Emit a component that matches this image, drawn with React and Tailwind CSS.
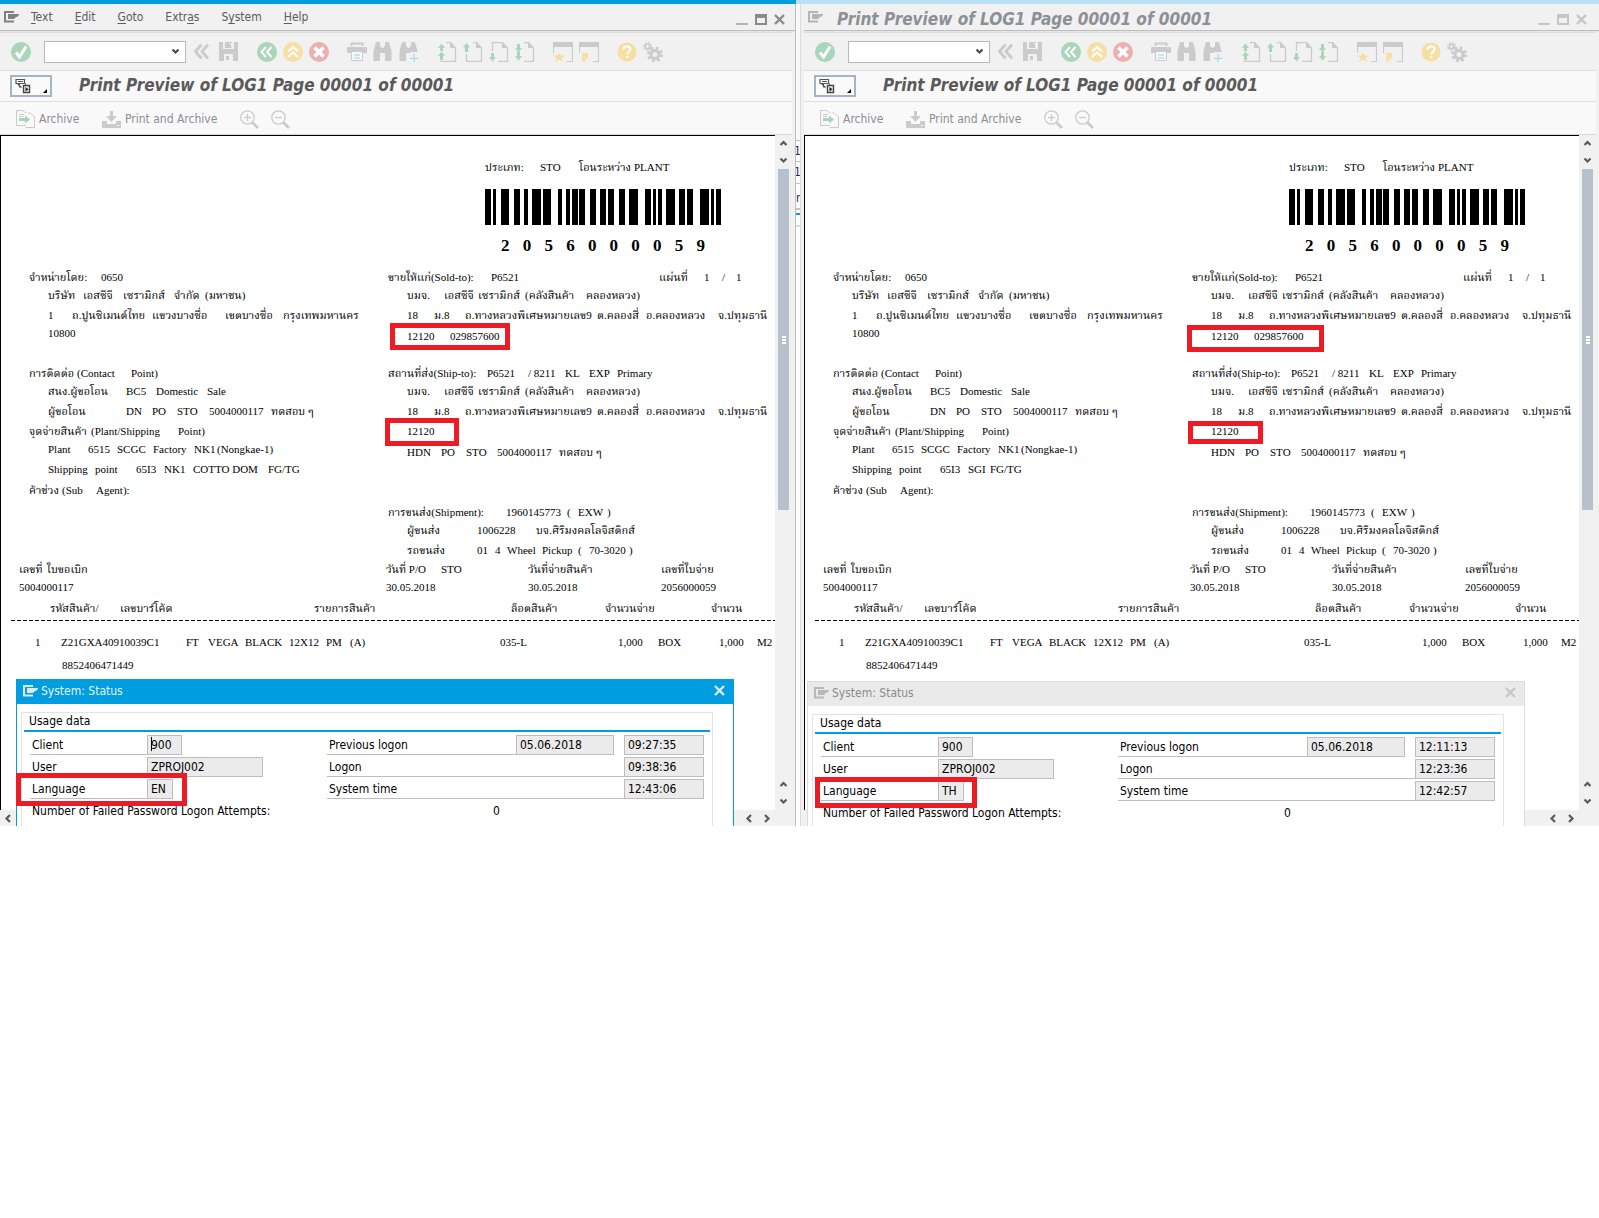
import React from "react";

const DOC_FONT = "font-['Liberation_Serif','Noto_Serif_Thai',serif]";

/* ---------- icons ---------- */

function Ico({ children, className = "size-5", box = "0 0 20 20" }) {
  return (
    <svg viewBox={box} className={className} fill="none" aria-hidden="true">
      {children}
    </svg>
  );
}

const GREY = "#cbcbcb";
const GREEN = "#a9d5b9";
const AMBER = "#f7dfa3";

function MenuIcon({ color }) {
  return (
    <svg viewBox="0 0 15 12" className="h-3 w-[15px] shrink-0" fill="none" aria-hidden="true">
      <path d="M10 1H1v9.500h9" stroke={color} strokeWidth="2" />
      <path d="M4 3h11v1l-2 2h-1l-2 2H4z" fill={color} />
    </svg>
  );
}

function CheckIcon() {
  return (
    <Ico>
      <circle cx="10" cy="10" r="10" fill={GREEN} />
      <path d="M5 10.500l3.500 4.500L15 4.500" stroke="#fff" strokeWidth="3" />
    </Ico>
  );
}

function BackChevrons() {
  return (
    <Ico>
      <path d="M8.500 2.500L2.500 9.500l6 7M15 2.500L9 9.500l6 7" stroke={GREY} strokeWidth="2.800" />
    </Ico>
  );
}

function SaveIcon() {
  return (
    <Ico>
      <path fillRule="evenodd" fill={GREY} d="M0 0h19v19H0zM4 0v7h11V0zM5 12v7h9v-7z" />
      <path fill={GREY} d="M6 0h7v6H6zM7 14h3v4H7z" />
      <path d="M10.500 1.500h2v4" stroke="#f1f1f1" />
    </Ico>
  );
}

function CircleBack() {
  return (
    <Ico>
      <circle cx="10" cy="10" r="10" fill={GREEN} />
      <path d="M9 5l-4.500 5L9 15M14.500 5L10 10l4.500 5" stroke="#fff" strokeWidth="2" />
    </Ico>
  );
}

function CircleUp() {
  return (
    <Ico>
      <circle cx="10" cy="10" r="10" fill={AMBER} />
      <path d="M5 9.500L10 5l5 4.500M5 15l5-4.500L15 15" stroke="#fff" strokeWidth="2.200" />
    </Ico>
  );
}

function CircleX() {
  return (
    <Ico>
      <circle cx="10" cy="10" r="10" fill="#ebb0b0" />
      <path d="M5.500 5.500l9 9M14.500 5.500l-9 9" stroke="#fff" strokeWidth="3.600" />
    </Ico>
  );
}

function PrinterIcon() {
  return (
    <Ico>
      <path d="M4.500 4V1.500h11V4" stroke={GREY} strokeWidth="2" />
      <rect y="5" width="20" height="6" rx="1" fill={GREY} />
      <path d="M0 8h3v3H0zM17 8h3v3h-3z" fill={GREY} />
      <path d="M4.500 9.500h11v9h-11z" fill="#f7f7f7" stroke={GREY} />
      <path d="M7 13h6M7 16h6" stroke="#b9e0f3" strokeWidth="1.500" />
      <path d="M16 6h2" stroke="#b9e0f3" strokeWidth="1.500" />
    </Ico>
  );
}

function Binoculars({ plus }) {
  return (
    <Ico>
      <path d="M3 0h4v4l2 2h1l2-2V0h4l2.500 9v10H12v-8H7v8H.500V9z" fill={GREY} />
      {plus && (
        <>
          <path d="M11 10h9v10h-9z" fill="#f1f1f1" />
          <path d="M11 16.500h8M15 12v8" stroke="#9ad4f0" />
        </>
      )}
    </Ico>
  );
}

const pageArrows = {
  first: ["M1 6l3.500-4.500L8 6H6v3H3V6z", "M1 14l3.500-4.500L8 14H6v4H3v-4z"],
  up: ["M0 5.500L3.500 1 7 5.500H5V10H2V5.500z"],
  down: ["M0 15l3.500 4.500L7 15H5v-4H2v4z"],
  last: ["M0 6l3.500 4.500L7 6H5V2H2v4z", "M0 14l3.500 4.500L7 14H5v-4H2v4z"],
};

const pageOutlines = {
  first: "M9 .500h4.500L18.500 6v13.500H2.500",
  up: "M10 .500h3.500L18.500 6v13.500h-15V12",
  down: "M3.500 9V.500h10L18.500 6v13.500H9",
  last: "M9 .500h4.500L18.500 6v13.500H9",
};

function PageIcon({ kind }) {
  return (
    <Ico>
      <path d={pageOutlines[kind]} stroke={GREY} strokeWidth="1.300" />
      <path d="M13 0v6h6z" fill={GREY} />
      {pageArrows[kind].map((d) => (
        <path key={d} d={d} fill={GREEN} />
      ))}
    </Ico>
  );
}

function WinStar({ arrow }) {
  return (
    <Ico>
      <path d="M0 0h20v5H0z" fill={GREY} />
      <path d="M.500 5v6M19.500 5v14.500H14" stroke={GREY} strokeWidth="1.200" />
      {arrow ? (
        <path d="M2 11h7v7l-2-2c-2 1-1 2 0 4H4c-2-3-1-5 0-6.500z" fill={AMBER} />
      ) : (
        <path d="M6 10l1.500 3.500H12l-3.500 2.500 1.500 4-4-2.500L2 20l1.500-4L0 13.500h4.500z" fill={AMBER} />
      )}
    </Ico>
  );
}

function HelpIcon() {
  return (
    <Ico>
      <circle cx="10" cy="10" r="9.500" fill={AMBER} />
      <path d="M6.500 7.500C6.500 3.500 13.500 3.500 13.500 7.500c0 2-3.200 2.200-3.200 4.700" stroke="#fff" strokeWidth="2" />
      <path d="M9.200 13.800h2.200V16H9.200z" fill="#fff" />
    </Ico>
  );
}

function GearsIcon() {
  return (
    <Ico>
      <circle cx="12" cy="12.500" r="4" stroke={GREY} strokeWidth="3" />
      <circle cx="12" cy="12.500" r="6.500" stroke={GREY} strokeWidth="3" strokeDasharray="2.600 2.500" />
      <circle cx="4.500" cy="4.500" r="2.200" stroke={GREY} strokeWidth="1.600" />
      <circle cx="4.500" cy="4.500" r="3.700" stroke={GREY} strokeWidth="1.600" strokeDasharray="1.500 1.400" />
    </Ico>
  );
}

function ArchiveIcon() {
  return (
    <Ico className="h-[18px] w-[19px]" box="0 0 19 18">
      <path d="M10 15.500H.500V.500h6L10 3M11.500 3h3l4 4v10.500H9.500" stroke={GREY} />
      <path d="M3 4.500h5M3 6.500h4" stroke={GREY} />
      <path d="M3 8h6V5.500l5 4-5 4V11H3z" fill={GREEN} />
    </Ico>
  );
}

function TrayIcon() {
  return (
    <Ico className="h-[18px] w-[19px]" box="0 0 19 18">
      <path d="M0 11h5v3h9v-3h5v7H0z" fill={GREY} />
      <path d="M8 1h3v5h4l-5.500 6L4 6h4z" fill={GREY} />
      <path d="M15 15.500h2" stroke="#f9f9f9" />
    </Ico>
  );
}

function Magnifier({ plus }) {
  return (
    <Ico className="size-[19px]" box="0 0 19 19">
      <circle cx="7.500" cy="7.500" r="6.700" stroke={GREY} strokeWidth="1.300" />
      <path d="M4 7.500h7" stroke={GREY} strokeWidth="1.300" />
      {plus && <path d="M7.500 4v7" stroke={GREY} strokeWidth="1.300" />}
      <path d="M12.500 12.500l5.500 5.500" stroke={GREY} strokeWidth="2.600" />
    </Ico>
  );
}

function Chevron({ dir = "down", color = "#5a5a5a" }) {
  const d = {
    down: "M1.500 2.500L4.500 5.500 7.500 2.500",
    up: "M1.500 6L4.500 3 7.500 6",
    left: "M6 1L2.500 4.500 6 8",
    right: "M3 1l3.500 3.500L3 8",
  }[dir];
  return (
    <svg viewBox="0 0 9 9" className="size-[9px]" fill="none" aria-hidden="true">
      <path d={d} stroke={color} strokeWidth="2.200" />
    </svg>
  );
}

function Cross({ color }) {
  return (
    <svg viewBox="0 0 11 11" className="size-[11px]" fill="none" aria-hidden="true">
      <path d="M1 1l9 9M10 1l-9 9" stroke={color} strokeWidth="2.400" />
    </svg>
  );
}

/* ---------- window chrome ---------- */

const menus = [
  ["", "T", "ext"],
  ["", "E", "dit"],
  ["", "G", "oto"],
  ["Extr", "a", "s"],
  ["S", "y", "stem"],
  ["", "H", "elp"],
];

const TITLE = "Print Preview of LOG1 Page 00001 of 00001";

function ToolButton({ label, children }) {
  return (
    <button type="button" aria-label={label} className="size-5 shrink-0">
      {children}
    </button>
  );
}

function MenuBar({ active }) {
  const color = active ? "#8a8a8a" : "#c6c6c6";
  return (
    <div className={`flex h-[27px] items-center border-b border-[#bdbdbd] pl-1 ${active ? "pr-2.5" : "pr-3"}`}>
      <MenuIcon color={active ? "#808080" : "#b4b4b4"} />
      {active ? (
        <nav className="ml-3 flex gap-[22px] text-xs text-[#5c5c5c]">
          {menus.map(([a, b, c]) => (
            <button type="button" key={a + b + c}>
              {a}
              <u className="underline-offset-2">{b}</u>
              {c}
            </button>
          ))}
        </nav>
      ) : (
        <span className="ml-3.5 pt-[3px] text-[17px] leading-6 font-bold whitespace-nowrap text-[#8b9097] italic">{TITLE}</span>
      )}
      <div className="ml-auto flex items-center gap-[7px] pt-1">
        <button type="button" aria-label="Minimize" className="flex h-3 w-3 items-end">
          <svg viewBox="0 0 12 2" className="h-0.5 w-3"><path d="M0 0h12v2H0z" fill={active ? "#b4b4b4" : color} /></svg>
        </button>
        <button type="button" aria-label="Maximize">
          <svg viewBox="0 0 12 11" className="h-[11px] w-3"><path fillRule="evenodd" d="M0 0h12v11H0zM2 4v5h8V4z" fill={color} /></svg>
        </button>
        <button type="button" aria-label="Close">
          <Cross color={color} />
        </button>
      </div>
    </div>
  );
}

function Toolbar() {
  return (
    <div className="flex h-[39px] items-center border-t border-b border-[#dedede] pl-[11px]">
      <ToolButton label="Enter"><CheckIcon /></ToolButton>
      <div className="relative ml-[13px] shrink-0">
        <select aria-label="Command" className="block h-[22px] w-[142px] appearance-none border border-[#b9b9b9] bg-white text-xs">
          <option></option>
        </select>
        <span className="pointer-events-none absolute top-1.5 right-1.5"><Chevron color="#4a4a4a" /></span>
      </div>
      <div className="ml-[7px] flex gap-[18px]">
        <div className="flex gap-1.5">
          <ToolButton label="Collapse"><BackChevrons /></ToolButton>
          <ToolButton label="Save"><SaveIcon /></ToolButton>
        </div>
        <div className="flex gap-1.5">
          <ToolButton label="Back"><CircleBack /></ToolButton>
          <ToolButton label="Exit"><CircleUp /></ToolButton>
          <ToolButton label="Cancel"><CircleX /></ToolButton>
        </div>
        <div className="flex gap-1.5">
          <ToolButton label="Print"><PrinterIcon /></ToolButton>
          <ToolButton label="Find"><Binoculars /></ToolButton>
          <ToolButton label="Find next"><Binoculars plus /></ToolButton>
        </div>
        <div className="flex gap-1.5">
          <ToolButton label="First page"><PageIcon kind="first" /></ToolButton>
          <ToolButton label="Previous page"><PageIcon kind="up" /></ToolButton>
          <ToolButton label="Next page"><PageIcon kind="down" /></ToolButton>
          <ToolButton label="Last page"><PageIcon kind="last" /></ToolButton>
        </div>
        <div className="flex gap-1.5">
          <ToolButton label="New session"><WinStar /></ToolButton>
          <ToolButton label="Create shortcut"><WinStar arrow /></ToolButton>
        </div>
        <div className="flex gap-1.5">
          <ToolButton label="Help"><HelpIcon /></ToolButton>
          <ToolButton label="Customize"><GearsIcon /></ToolButton>
        </div>
      </div>
    </div>
  );
}

function TitleRow() {
  return (
    <div className="flex h-[31px] items-center border-b border-[#dedede] bg-[#f9f9f9] pl-2.5">
      <button type="button" aria-label="Services for object" className="flex h-[22px] w-[42px] items-center justify-between border-2 border-[#a3b4c6] bg-[#fafafa] px-[3px]">
        <svg viewBox="0 0 16 16" className="size-4" fill="none" aria-hidden="true">
          <path d="M1 1.500h8.500v4H1zM3 3.500h5M4.500 6v3.500M2.500 5.500l4 4" stroke="#555" strokeWidth="1.200" />
          <path d="M7 5.500h3.500v2" stroke="#666" />
          <path d="M8.500 7.500h6v7h-6z" fill="#eee" stroke="#444" strokeWidth="1.400" />
          <path d="M10.500 9l3 2.300-3 2.200z" fill="#222" />
        </svg>
        <svg viewBox="0 0 4 4" className="mt-2.5 size-1" aria-hidden="true"><path d="M4 0v4H0z" fill="#000" /></svg>
      </button>
      <h1 className="ml-[27px] pb-[3px] text-[17px] leading-6 font-bold whitespace-nowrap text-[#5a5a5a] italic">{TITLE}</h1>
    </div>
  );
}

function ActionRow() {
  return (
    <div className="flex h-[33px] items-center border-b border-[#d6d6d6] bg-[#f9f9f9] pt-0.5 pl-4 text-xs text-[#8b8d95]">
      <button type="button" className="flex w-[86px] items-center gap-1"><ArchiveIcon />Archive</button>
      <button type="button" className="flex w-[138px] items-center gap-1 whitespace-nowrap"><TrayIcon />Print and Archive</button>
      <button type="button" aria-label="Zoom in" className="w-[31px]"><Magnifier plus /></button>
      <button type="button" aria-label="Zoom out"><Magnifier /></button>
    </div>
  );
}

/* ---------- printed delivery document ---------- */

function Line({ parts, className = "" }) {
  return (
    <div className={`flex h-[18px] items-center whitespace-nowrap ${className}`}>
      {parts.map(([text, width], i) => (
        <span key={i} className={`shrink-0 ${width || ""}`}>{text}</span>
      ))}
    </div>
  );
}

const bars = [
  [0, 18], [24, 9], [48, 24], [87, 18], [117, 12], [141, 27], [174, 24], [219, 12], [243, 12], [261, 18],
  [282, 18], [315, 18], [345, 18], [369, 18], [402, 18], [432, 27], [480, 18], [504, 9], [519, 12],
  [543, 27], [582, 18], [606, 18], [645, 27], [678, 9], [693, 15],
];

function Barcode() {
  return (
    <svg viewBox="0 0 708 108" preserveAspectRatio="none" className="h-9 w-[236px]" role="img" aria-label="2056000059">
      {bars.map(([x, w]) => (
        <rect key={x} x={x} width={w} height="108" fill="#000" />
      ))}
    </svg>
  );
}

const address = [
  ["18", "w-[27px]"], ["ม.8", "w-[31px]"], ["ถ.ทางหลวงพิเศษหมายเลข9", "w-[132px]"],
  ["ต.คลองสี่", "w-[49px]"], ["อ.คลองหลวง", "w-[72px]"], ["จ.ปทุมธานี"],
];
const company = [
  ["บมจ.", "w-[37px]"], ["เอสซีจี", "w-[34px]"], ["เซรามิกส์", "w-[47px]"], ["(คลังสินค้า", "w-[61px]"], ["คลองหลวง)"],
];

function Delivery({ route }) {
  return (
    <div className={`min-w-0 flex-1 overflow-hidden border-t border-l border-black bg-white pt-[22px] pb-[136px] text-[11px] leading-[18px] text-black ${DOC_FONT}`}>
      <div className="ml-[484px] w-[236px]">
        <Line parts={[["ประเภท:", "w-[55px]"], ["STO", "w-[39px]"], ["โอนระหว่าง", "w-[55px]"], ["PLANT"]]} />
        <div className="mt-[13px] flex"><Barcode /></div>
        <div className="mx-4 mt-3 flex justify-between text-[17px] font-bold">
          {"2056000059".split("").map((d, i) => <span key={i}>{d}</span>)}
        </div>
      </div>

      <div className="mt-[13px] flex pl-7">
        <div className="w-[359px] shrink-0">
          <Line parts={[["จำหน่ายโดย:", "w-[72px]"], ["0650"]]} />
          <div className="pl-[19px]">
            <Line parts={[["บริษัท", "w-[35px]"], ["เอสซีจี", "w-10"], ["เซรามิกส์", "w-[51px]"], ["จำกัด", "w-[31px]"], ["(มหาชน)"]]} />
            <Line className="mt-0.5" parts={[["1", "w-6"], ["ถ.ปูนซิเมนต์ไทย", "w-20"], ["แขวงบางซื่อ", "w-[73px]"], ["เขตบางซื่อ", "w-[58px]"], ["กรุงเทพมหานคร"]]} />
            <Line parts={[["10800"]]} />
          </div>
          <Line className="mt-[22px]" parts={[["การติดต่อ", "w-[48px]"], ["(Contact", "w-[54px]"], ["Point)"]]} />
          <div className="pl-[19px]">
            <Line parts={[["สนง.ผู้ขอโอน", "w-[78px]"], ["BC5", "w-[30px]"], ["Domestic", "w-[51px]"], ["Sale"]]} />
            <Line className="mt-0.5" parts={[["ผู้ขอโอน", "w-[78px]"], ["DN", "w-[26px]"], ["PO", "w-[25px]"], ["STO", "w-8"], ["5004000117", "w-[62px]"], ["ทดสอบ ๆ"]]} />
          </div>
          <Line className="mt-0.5" parts={[["จุดจ่ายสินค้า", "w-[62px]"], ["(Plant/Shipping", "w-[87px]"], ["Point)"]]} />
          <div className="pl-[19px]">
            <Line parts={[["Plant", "w-10"], ["6515", "w-[29px]"], ["SCGC", "w-9"], ["Factory", "w-[41px]"], ["NK1", "w-[23px]"], ["(Nongkae-1)"]]} />
            <Line className="mt-0.5" parts={[["Shipping", "w-[47px]"], ["point", "w-[41px]"], ["65I3", "w-7"], ...route]} />
          </div>
          <Line className="mt-[3px]" parts={[["ค้าช่วง", "w-[33px]"], ["(Sub", "w-[34px]"], ["Agent):"]]} />
        </div>

        <div>
          <Line parts={[["ขายให้แก่(Sold-to):", "w-[103px]"], ["P6521", "w-[168px]"], ["แผ่นที่", "w-[45px]"], ["1", "w-[18px]"], ["/", "w-3.5"], ["1"]]} />
          <div className="pl-[19px]">
            <Line parts={company} />
            <Line className="mt-0.5" parts={address} />
            <Line className="mt-[3px]" parts={[["12120", "w-[43px]"], ["029857600"]]} />
          </div>
          <Line className="mt-[19px]" parts={[["สถานที่ส่ง(Ship-to):", "w-[99px]"], ["P6521", "w-[41px]"], ["/ 8211", "w-[37px]"], ["KL", "w-6"], ["EXP", "w-7"], ["Primary"]]} />
          <div className="pl-[19px]">
            <Line parts={company} />
            <Line className="mt-0.5" parts={address} />
            <Line className="mt-0.5" parts={[["12120"]]} />
            <Line className="mt-[3px]" parts={[["HDN", "w-[34px]"], ["PO", "w-[25px]"], ["STO", "w-[31px]"], ["5004000117", "w-[62px]"], ["ทดสอบ ๆ"]]} />
          </div>
          <Line className="mt-[42px]" parts={[["การขนส่ง(Shipment):", "w-[118px]"], ["1960145773", "w-[61px]"], ["(", "w-[11px]"], ["EXW", "w-[29px]"], [")"]]} />
          <div className="pl-[19px]">
            <Line parts={[["ผู้ขนส่ง", "w-[70px]"], ["1006228", "w-[59px]"], ["บจ.ศิริมงคลโลจิสติกส์"]]} />
            <Line className="mt-0.5" parts={[["รถขนส่ง", "w-[70px]"], ["01", "w-[18px]"], ["4", "w-3"], ["Wheel", "w-[35px]"], ["Pickup", "w-9"], ["(", "w-[11px]"], ["70-3020", "w-10"], [")"]]} />
          </div>
        </div>
      </div>

      <div className="mt-px pl-[18px]">
        <Line parts={[["เลขที่", "w-7"], ["ใบขอเบิก", "w-[339px]"], ["วันที่ P/O", "w-[55px]"], ["STO", "w-[87px]"], ["วันที่จ่ายสินค้า", "w-[133px]"], ["เลขที่ใบจ่าย"]]} />
        <Line parts={[["5004000117", "w-[367px]"], ["30.05.2018", "w-[142px]"], ["30.05.2018", "w-[133px]"], ["2056000059"]]} />
      </div>

      <table className="mt-[3px] ml-2.5 w-[764px] table-fixed border-collapse text-left whitespace-nowrap">
        <colgroup>
          <col className="w-[39px]" />
          <col className="w-[136px]" />
          <col className="w-[314px]" />
          <col className="w-[105px]" />
          <col className="w-[106px]" />
          <col />
        </colgroup>
        <thead>
          <tr>
            <th className="p-0 font-normal" />
            <th className="p-0 font-normal"><Line parts={[["รหัสสินค้า/", "w-[70px]"], ["เลขบาร์โค้ด"]]} /></th>
            <th className="p-0 pl-32 font-normal">รายการสินค้า</th>
            <th className="p-0 pl-[11px] font-normal">ล็อตสินค้า</th>
            <th className="p-0 font-normal">จำนวนจ่าย</th>
            <th className="p-0 font-normal">จำนวน</th>
          </tr>
        </thead>
        <tbody>
          <tr>
            <td colSpan="6" className="p-0 pt-[3px] pb-3">
              <div className="h-px bg-[repeating-linear-gradient(90deg,#000_0_4px,transparent_4px_6px)]" />
            </td>
          </tr>
          <tr>
            <td className="p-0 pl-6">1</td>
            <td className="p-0 pl-[11px]">Z21GXA40910039C1</td>
            <td className="p-0"><Line parts={[["FT", "w-[22px]"], ["VEGA", "w-[37px]"], ["BLACK", "w-11"], ["12X12", "w-[37px]"], ["PM", "w-6"], ["(A)"]]} /></td>
            <td className="p-0">035-L</td>
            <td className="p-0 pl-[13px]"><Line parts={[["1,000", "w-10"], ["BOX"]]} /></td>
            <td className="p-0 pl-2"><Line parts={[["1,000", "w-[38px]"], ["M2"]]} /></td>
          </tr>
          <tr>
            <td className="p-0" />
            <td className="p-0 pt-[5px] pl-3">8852406471449</td>
          </tr>
        </tbody>
      </table>
    </div>
  );
}

function ScrollButton({ dir }) {
  return (
    <button type="button" aria-label={`Scroll ${dir}`} className="flex size-[17px] shrink-0 items-center justify-center">
      <Chevron dir={dir} />
    </button>
  );
}

function VerticalScroll() {
  return (
    <div className="flex w-[17px] shrink-0 flex-col items-center bg-[#f1f1f1]">
      <ScrollButton dir="up" />
      <ScrollButton dir="down" />
      <div className="flex h-[341px] w-[11px] flex-col items-center justify-center gap-px bg-[#b7c1cb]">
        <i className="h-0.5 w-1 bg-white" />
        <i className="h-0.5 w-1 bg-white" />
        <i className="h-0.5 w-1 bg-white" />
      </div>
      <div className="mt-auto">
        <ScrollButton dir="up" />
        <ScrollButton dir="down" />
      </div>
    </div>
  );
}

/* ---------- status dialog ---------- */

function Field({ id, label, labelWidth, children }) {
  return (
    <div className="flex h-5">
      <label htmlFor={id} className={`border-b border-[#bdbdbd] pl-0.5 leading-5 whitespace-nowrap ${labelWidth}`}>{label}</label>
      {children}
    </div>
  );
}

function Box({ id, value, width, label }) {
  return (
    <input
      id={id}
      aria-label={label}
      readOnly
      defaultValue={value}
      className={`h-5 border border-[#bdbdbd] bg-[#ebebeb] pt-0 pr-0 pb-px pl-[3px] text-xs outline-none ${width}`}
    />
  );
}

function StatusDialog({ id, active, place, data }) {
  return (
    <section
      aria-label="System: Status"
      className={`absolute bottom-0 w-[718px] overflow-hidden border border-b-0 bg-white text-xs text-black ${active ? "border-[#009de0]" : "border-[#dcdcdc]"} ${place}`}
    >
      <header className={`flex h-6 items-center pr-2 pb-[3px] pl-1.5 ${active ? "bg-[#009de0] text-[#e4f2fa]" : "bg-[#eaeaea] text-[#8a8a8a]"}`}>
        <MenuIcon color={active ? "#dfe9ef" : "#b8b8b8"} />
        <h2 className="ml-[3px]">System: Status</h2>
        <button type="button" aria-label="Close" className="ml-auto"><Cross color={active ? "#dcebf3" : "#c8c8c8"} /></button>
      </header>
      <div className="mt-2 mr-5 ml-1 border-x border-t border-[#e3e3e3] px-0.5 pb-9">
        <h3 className="-mb-px box-content h-[17px] border-b-2 border-[#009de0] pl-[5px] leading-[17px]">Usage data</h3>
        <div className="mt-1 flex justify-between pr-[7px] pl-1.5">
          <div className="flex w-[297px] shrink-0 flex-col gap-0.5">
            <Field id={`${id}-client`} label="Client" labelWidth="w-[117px]">
              <div className="relative flex">
                <Box id={`${id}-client`} value="900" width="w-[35px]" />
                {active && <i className="absolute top-0.5 left-1 h-3.5 w-px bg-black" />}
              </div>
            </Field>
            <Field id={`${id}-user`} label="User" labelWidth="w-[117px]"><Box id={`${id}-user`} value="ZPROJ002" width="w-[116px]" /></Field>
            <Field id={`${id}-lang`} label="Language" labelWidth="w-[117px]"><Box id={`${id}-lang`} value={data.lang} width="w-[26px]" /></Field>
            <p className="flex h-5 pl-0.5 leading-5 whitespace-nowrap">
              <span className="w-[461px] shrink-0">Number of Failed Password Logon Attempts:</span>
              <span>0</span>
            </p>
          </div>
          <div className="flex w-[377px] shrink-0 flex-col gap-0.5">
            <Field id={`${id}-prev`} label="Previous logon" labelWidth="w-[189px]">
              <Box id={`${id}-prev`} value="05.06.2018" width="w-[98px]" />
              <div className="ml-2.5 flex"><Box label="Previous logon time" value={data.prev} width="w-20" /></div>
            </Field>
            <Field id={`${id}-logon`} label="Logon" labelWidth="w-[297px]"><Box id={`${id}-logon`} value={data.logon} width="w-20" /></Field>
            <Field id={`${id}-time`} label="System time" labelWidth="w-[297px]"><Box id={`${id}-time`} value={data.time} width="w-20" /></Field>
          </div>
        </div>
      </div>
    </section>
  );
}

/* ---------- windows ---------- */

function SapWindow({ id, active, frame, body, route, dialogPlace, data, marks }) {
  return (
    <main className={`flex min-w-0 flex-col overflow-hidden bg-[#f1f1f1] ${frame}`}>
      <div className={`h-1 ${active ? "bg-[#009de0]" : "bg-[#b9e2f7]"}`} />
      <div className={body.shell}>
        <div className={body.bar}>
          <MenuBar active={active} />
        </div>
        <div className="h-px bg-[#e6e6e6]" />
        <div className={body.pad}>
          <Toolbar />
          <TitleRow />
          <ActionRow />
          <div className="relative">
            <div className="flex">
              <Delivery route={route} />
              <VerticalScroll />
            </div>
            <div className="flex h-4 items-center bg-[#f1f1f1] pr-[17px]">
              <ScrollButton dir="left" />
              <div className="ml-auto flex"><ScrollButton dir="left" /><ScrollButton dir="right" /></div>
            </div>
            <StatusDialog id={id} active={active} place={dialogPlace} data={data} />
            {marks.map((m) => (
              <div key={m} className={`pointer-events-none absolute border-5 border-[#ed1c24] ${m}`} />
            ))}
          </div>
        </div>
      </div>
    </main>
  );
}

export default function App() {
  return (
    <div className="flex min-h-screen items-start bg-white font-['DejaVu_Sans_Condensed','Noto_Sans',sans-serif]">
      <SapWindow
        id="a"
        active
        frame="flex-[796_1_0%]"
        body={{ shell: "border-r border-[#bdbdbd]", bar: "", pad: "pr-[3px]" }}
        route={[["NK1", "w-[29px]"], ["COTTO DOM", "w-[75px]"], ["FG/TG"]]}
        dialogPlace="top-[544px] left-4"
        data={{ lang: "EN", prev: "09:27:35", logon: "09:38:36", time: "12:43:06" }}
        marks={[
          "top-[188px] left-[390px] h-[27px] w-[120px]",
          "top-[283px] left-[385px] h-7 w-[74px]",
          "top-[638px] left-4 h-[33px] w-[171px]",
        ]}
      />
      <div aria-hidden="true" className="flex w-1 shrink-0 flex-col self-stretch overflow-hidden text-xs leading-5 text-[#2b2360]">
        <div className="h-1 bg-[#b9e2f7]" />
        <div className="h-[136px] bg-[#f9f9f9]" />
        <div className="h-[22px] border-y border-[#c4c4c4] indent-[-2px]">1</div>
        <div className="h-[22px] border-b border-[#c4c4c4] indent-[-2px]">1</div>
        <div className="mt-1 h-[22px] border-b-2 border-[#c4c4c4]">r</div>
        <div className="mt-[3px] h-0.5 bg-[#009de0]" />
        <div className="mt-2.5 h-0.5 bg-[#cfdfee]" />
      </div>
      <SapWindow
        id="b"
        frame="flex-[799_1_0%]"
        body={{ shell: "border-l border-[#dcdcdc]", bar: "pl-[3px]", pad: "px-[3px]" }}
        route={[["SGI", "w-[22px]"], ["FG/TG"]]}
        dialogPlace="top-[546px] left-[3px]"
        data={{ lang: "TH", prev: "12:11:13", logon: "12:23:36", time: "12:42:57" }}
        marks={[
          "top-[190px] left-[383px] h-[27px] w-[137px]",
          "top-[286px] left-[384px] h-[23px] w-[75px]",
          "top-[642px] left-[11px] h-[31px] w-[162px]",
        ]}
      />
    </div>
  );
}
